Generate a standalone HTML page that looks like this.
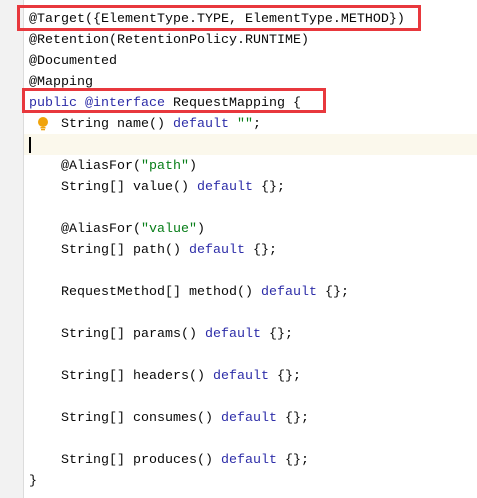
<!DOCTYPE html>
<html><head><style>
body{margin:0;width:477px;height:498px;background:#fff;position:relative;overflow:hidden;font-family:"Liberation Mono",monospace;font-size:13.33px;color:#080808}
.g{position:absolute;left:0;top:0;width:23px;height:498px;background:#f2f2f2;border-right:1px solid #dcdcdc}
.hl{position:absolute;left:24px;top:134px;width:453px;height:21px;background:#fbf8ec}
.l{position:absolute;left:29px;white-space:pre;line-height:21px;height:21px;margin-top:2px}
.k{color:#2c2ca8}.s{color:#067d17}
.box{position:absolute;border:3px solid #e8383d;box-sizing:border-box}
.cur{position:absolute;left:29px;top:137px;width:2px;height:16px;background:#000}
</style></head><body>
<div class="g"></div>
<div class="hl"></div>
<div class="cur"></div>
<div class="l" style="top:7px">@Target({ElementType.TYPE, ElementType.METHOD})</div>
<div class="l" style="top:28px">@Retention(RetentionPolicy.RUNTIME)</div>
<div class="l" style="top:49px">@Documented</div>
<div class="l" style="top:70px">@Mapping</div>
<div class="l" style="top:91px"><span class="k">public</span> <span class="k">@interface</span> RequestMapping {</div>
<div class="l" style="top:112px">    String name() <span class="k">default</span> <span class="s">""</span>;</div>
<div class="l" style="top:154px">    @AliasFor(<span class="s">"path"</span>)</div>
<div class="l" style="top:175px">    String[] value() <span class="k">default</span> {};</div>
<div class="l" style="top:217px">    @AliasFor(<span class="s">"value"</span>)</div>
<div class="l" style="top:238px">    String[] path() <span class="k">default</span> {};</div>
<div class="l" style="top:280px">    RequestMethod[] method() <span class="k">default</span> {};</div>
<div class="l" style="top:322px">    String[] params() <span class="k">default</span> {};</div>
<div class="l" style="top:364px">    String[] headers() <span class="k">default</span> {};</div>
<div class="l" style="top:406px">    String[] consumes() <span class="k">default</span> {};</div>
<div class="l" style="top:448px">    String[] produces() <span class="k">default</span> {};</div>
<div class="l" style="top:469px">}</div>
<svg style="position:absolute;left:36px;top:116px" width="14" height="16" viewBox="0 0 14 16"><circle cx="7" cy="6" r="5" fill="#f0a30a"/><rect x="4.5" y="11" width="5" height="1.5" fill="#f0a30a"/><rect x="5" y="13" width="4" height="1.3" fill="#f0a30a"/></svg>
<div class="box" style="left:17px;top:5px;width:404px;height:26px"></div>
<div class="box" style="left:22px;top:88px;width:304px;height:25px"></div>
</body></html>
